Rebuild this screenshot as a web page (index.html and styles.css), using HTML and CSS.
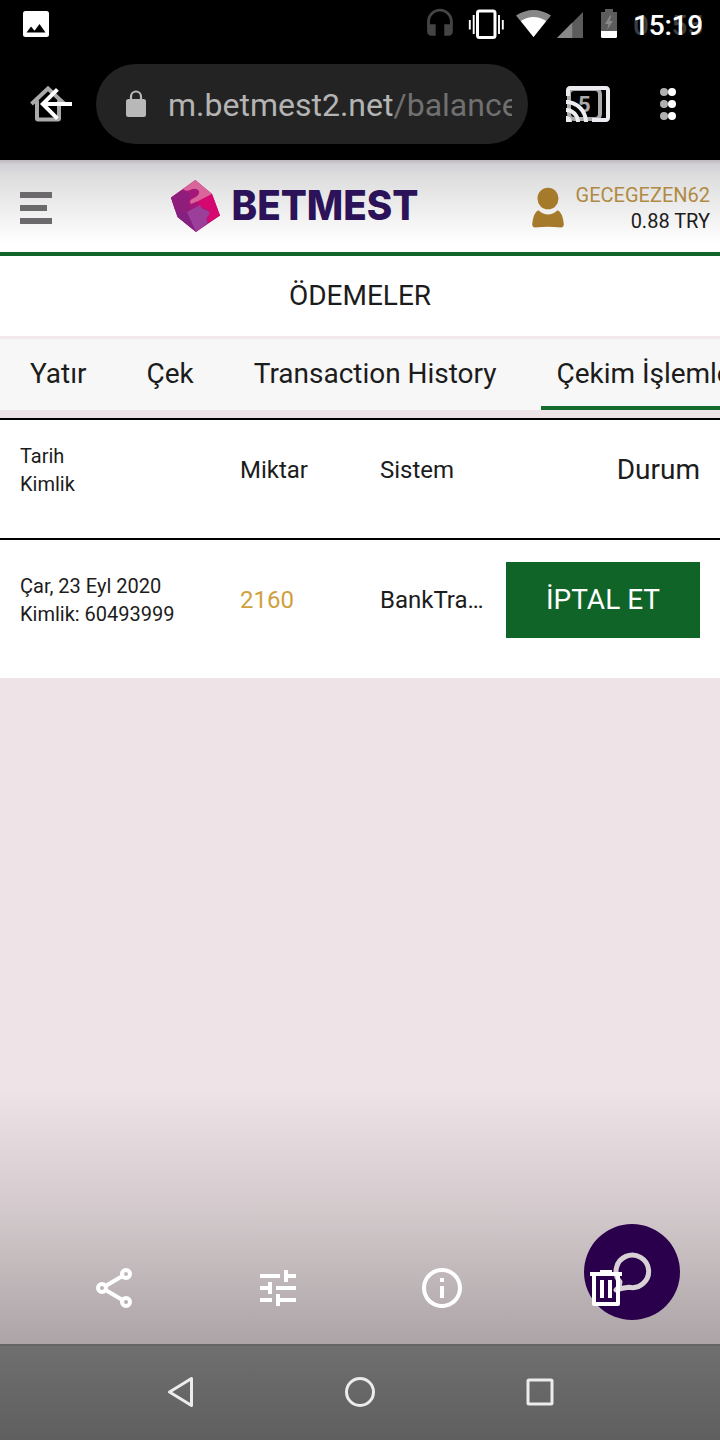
FILE: index.html
```html
<!DOCTYPE html>
<html lang="tr">
<head>
<meta charset="UTF-8">
<meta name="viewport" content="width=device-width, initial-scale=1.0">
<title>Betmest</title>
<link rel="stylesheet" href="styles.css">
</head>
<body>
<div class="screen">
    <div class="status-bar">
        <svg class="photo-icon" width="26" height="26" viewBox="0 0 26 26">
            <rect width="26" height="26" rx="2.5" fill="#fff"/>
            <path d="M3.5 21.5L8 15.5l3.5 4.2 5-6.7 6 8.5z" fill="#000"/>
        </svg>
        <svg class="status-icons" width="200" height="48" viewBox="0 0 200 48">
            <!-- headset -->
            <path transform="translate(2.8 7.2) scale(1.43)" fill="#444" d="M12 1c-4.97 0-9 4.03-9 9v7c0 1.66 1.34 3 3 3h3v-8H5v-2c0-3.87 3.13-7 7-7s7 3.13 7 7v2h-4v8h3c1.66 0 3-1.34 3-3v-7c0-4.97-4.03-9-9-9z"/>
            <!-- vibrate -->
            <rect x="57.5" y="11" width="17.5" height="26.5" rx="2" fill="none" stroke="#fff" stroke-width="3"/>
            <path d="M49.8 20v9.5M53.7 15v19M79 15v19M82.8 20v9.5" stroke="#fff" stroke-width="1.9"/>
            <!-- wifi -->
            <path d="M96 15.5Q113.500 4.500 131 15.500L113.500 37z" fill="#888"/>
            <path d="M100.800 21Q113.500 13 126.200 21L113.500 37z" fill="#fff"/>
            <!-- signal -->
            <path d="M137 38L163 12v26z" fill="#5c5c5c"/>
            <path d="M137 38l15.200-15.200V38z" fill="#888"/>
            <!-- battery -->
            <path d="M181 12h4V9h8v3h4v19h-16z" fill="#5c5c5c"/>
            <path d="M190 15.500l-5 8.500h3.500l-1.500 6 6-9h-3.500l2-5.500z" fill="#888"/>
            <path d="M181 31h16v5.500q0 1.500-1.500 1.500h-13q-1.500 0-1.500-1.500z" fill="#fff"/>
        </svg>
        <div class="clock"><span class="clock-ghost">05:55</span>15:19</div>
    </div>

    <div class="browser-bar">
        <svg class="back" width="48" height="48" viewBox="0 0 48 48">
            <path d="M3.500 24.500L20 9l16.500 15.500M9 21v18q0 1 1 1h20q1 0 1-1V21" transform="translate(-4 -.5)" fill="none" stroke="#aaa" stroke-width="4"/>
            <path d="M40 22H15.660l11.180-11.180L24 8 8 24l16 16 2.820-2.820L15.660 26H40v-4z" fill="#fff"/>
        </svg>
        <div class="address">
            <svg width="22" height="28" viewBox="0 0 22 28">
                <rect x="1" y="9" width="20" height="18" rx="2.500" fill="#b8b8b8"/>
                <path d="M6 10V6.500a5 5 0 0 1 10 0V10" fill="none" stroke="#b8b8b8" stroke-width="2.200"/>
            </svg>
            <div class="url">m.betmest2.net<span>/balance</span></div>
        </div>
        <svg class="cast" width="48" height="48" viewBox="0 0 48 48">
            <rect x="5" y="9" width="31" height="30" rx="5" fill="none" stroke="#aaa" stroke-width="4"/>
            <text x="14" y="31.500" class="tab-count">5</text>
            <path transform="scale(2)" fill="#ececf0" d="M21 3H3c-1.100 0-2 .9-2 2v3h2V5h18v14h-7v2h7c1.100 0 2-.9 2-2V5c0-1.100-.9-2-2-2zM1 18v3h3c0-1.660-1.340-3-3-3zm0-4v2c2.760 0 5 2.240 5 5h2c0-3.870-3.130-7-7-7zm0-4v2c4.970 0 9 4.030 9 9h2c0-6.080-4.930-11-11-11z"/>
        </svg>
        <svg class="more" width="16" height="32" viewBox="0 0 16 32">
            <g fill="#b0b0b0"><circle cx="4" cy="4" r="4"/><circle cx="4" cy="16" r="4"/><circle cx="4" cy="28" r="4"/></g>
            <g fill="#fff"><circle cx="12" cy="4" r="4"/><circle cx="12" cy="16" r="4"/><circle cx="12" cy="28" r="4"/></g>
        </svg>
    </div>

    <div class="site-header">
        <div class="menu"><i></i><i class="short"></i><i></i></div>
        <svg class="logo" width="250" height="54" viewBox="0 0 250 54">
            <path d="M25.300 1L42 15 50 36.500 26 53 7.500 38 1 18.500z" fill="#a51778"/>
            <path d="M1 18.500L20 29l6 24L7.500 38z" fill="#84207f"/>
            <path d="M1 18.500L12 11l8 4-2 8 3 8-3 5L5 31z" fill="#8f1d7c"/>
            <path d="M25.300 1L42 15l-9 6q-6 1-12 4-3-4 3-6 6-3 5-7-3-4-9-1-4 2-7-1z" fill="#d9659a"/>
            <path d="M42 15l8 21.500-11 7q-4-2-1-7 4-6-4-7-9-2-5-8z" fill="#d4086f"/>
            <path d="M17 33l13-7q1 4 6 5 6 2 2 6-3 3 0 6.500L26 53z" fill="#9c3f9b"/>
            <text x="61.500" y="41" textLength="187" lengthAdjust="spacingAndGlyphs">BETMEST</text>
        </svg>
        <div class="account">
            <svg width="34" height="42" viewBox="0 0 34 42">
                <ellipse cx="17" cy="11.500" rx="10.500" ry="10.800"/>
                <path d="M7.500 23.200Q17 32 26.500 23.200 31.500 25 32.800 37q0 3.500-3 3.500-12.800-1.500-25.600 0-3 0-3-3.500Q2.500 25 7.500 23.200z"/>
            </svg>
            <div class="account-text">
                <div class="user">GECEGEZEN62</div>
                <div>0.88 TRY</div>
            </div>
        </div>
    </div>

    <div class="page-title">ÖDEMELER</div>
    <div class="tabs">
        <div class="tab">Yatır</div>
        <div class="tab">Çek</div>
        <div class="tab">Transaction History</div>
        <div class="tab active">Çekim İşlemleri</div>
    </div>

    <div class="table">
        <div class="row head">
            <div class="date">Tarih<br>Kimlik</div>
            <div class="amount">Miktar</div>
            <div class="system">Sistem</div>
            <div class="state">Durum</div>
        </div>
        <div class="row">
            <div class="date">Çar, 23 Eyl 2020<br>Kimlik: 60493999</div>
            <div class="amount gold">2160</div>
            <div class="system">BankTra…</div>
            <div class="state"><button>İPTAL ET</button></div>
        </div>
    </div>

    <div class="shade">
        <svg class="chat" width="96" height="96" viewBox="0 0 96 96">
            <circle cx="48" cy="48" r="48" fill="#2a004c"/>
            <path d="M36 58a16.300 16.300 0 1 1 9 5.300q-7 .7-13 2.700l3-3z" fill="none" stroke="#d8d2d7" stroke-width="5" stroke-linejoin="round"/>
        </svg>
        <div class="actions">
            <svg width="48" height="48" viewBox="0 0 48 48" fill="none" stroke="#fff" stroke-width="4">
                <circle cx="12" cy="24" r="4"/><circle cx="36" cy="10" r="4"/><circle cx="36" cy="38" r="4"/>
                <path d="M15.500 22l17-10M15.500 26l17 10"/>
            </svg>
            <svg width="48" height="48" viewBox="0 0 24 24" fill="#fff">
                <path d="M3 17v2h6v-2H3zM3 5v2h10V5H3zm10 16v-2h8v-2h-8v-2h-2v6h2zM7 9v2H3v2h4v2h2V9H7zm14 4v-2H11v2h10zm-6-4h2V7h4V5h-4V3h-2v6z"/>
            </svg>
            <svg width="48" height="48" viewBox="0 0 24 24" fill="#fff">
                <path d="M11 7h2v2h-2zm0 4h2v6h-2zm1-9C6.480 2 2 6.480 2 12s4.480 10 10 10 10-4.480 10-10S17.520 2 12 2zm0 18c-4.410 0-8-3.590-8-8s3.590-8 8-8 8 3.590 8 8-3.590 8-8 8z"/>
            </svg>
            <svg width="48" height="48" viewBox="0 0 48 48" fill="#fff">
                <path d="M18 6h12v2h10v4H8V8h10zM18 16h4v18h-4zM26 16h4v18h-4z"/>
                <path d="M12 11v29h24V11" fill="none" stroke="#fff" stroke-width="4" stroke-linejoin="round"/>
            </svg>
        </div>
    </div>

    <div class="nav-bar">
        <svg width="32" height="32" viewBox="0 0 32 32"><path d="M5.500 16L27.500 2.500v27z"/></svg>
        <svg width="32" height="32" viewBox="0 0 32 32"><circle cx="16" cy="16" r="13.500"/></svg>
        <svg width="32" height="32" viewBox="0 0 32 32"><rect x="4" y="4" width="24" height="24" rx="1"/></svg>
    </div>
</div>
</body>
</html>
```

FILE: styles.css
```css
body {
    margin: 0;
    font-family: Roboto, sans-serif;
    color: #1c1c1c;
    background-color: #eee3e6;
}
svg {
    display: block;
    flex-shrink: 0;
}
.screen {
    display: flex;
    flex-direction: column;
    width: 720px;
    height: 1440px;
    overflow: hidden;
}

/* Status bar */
.status-bar {
    display: flex;
    height: 48px;
    background-color: #000;
}
.photo-icon {
    margin: 11px 0 0 23px;
}
.status-icons {
    margin-left: 371px;
}
.clock {
    position: relative;
    margin-left: 13px;
    line-height: 51px;
    font-size: 28px;
    font-weight: 500;
    letter-spacing: -0.2px;
    color: #fff;
    z-index: 0;
}
.clock-ghost {
    position: absolute;
    left: 0;
    top: 0;
    color: #3c3c3c;
    z-index: -1;
}

/* Browser bar */
.browser-bar {
    display: flex;
    align-items: center;
    height: 112px;
    background-color: #000;
}
.back {
    margin-left: 32px;
    overflow: visible;
}
.address {
    display: flex;
    align-items: center;
    box-sizing: border-box;
    width: 432px;
    height: 80px;
    margin-left: 16px;
    padding: 0 16px 0 29px;
    border-radius: 40px;
    background-color: #232323;
}
.url {
    flex: 1;
    margin-left: 21px;
    overflow: hidden;
    white-space: nowrap;
    font-size: 32px;
    line-height: 44px;
    padding-top: 2px;
    color: #b4b4b4;
}
.url span {
    color: #707070;
}
.cast {
    margin-left: 36px;
}
.tab-count {
    font-size: 22px;
    font-weight: 700;
    fill: #aaa;
}
.more {
    margin-left: 48px;
}

/* Site header */
.site-header {
    display: flex;
    box-sizing: border-box;
    height: 96px;
    border-bottom: 4px solid #11652a;
    background: linear-gradient(#bdb9bc 0, #d2d2d8 5px, #dcdcdc 14px, #fff 84px);
}
.menu {
    display: flex;
    flex-direction: column;
    gap: 7px;
    width: 32px;
    margin: 32px 0 0 20px;
}
.menu i {
    height: 6px;
    background-color: #6b696c;
}
.menu .short {
    width: 27px;
}
.logo {
    margin: 19px 0 0 118px;
    overflow: visible;
}
.logo text {
    font-family: Inter, sans-serif;
    font-size: 41px;
    font-weight: 800;
    fill: #2b1259;
}
.account {
    display: flex;
    flex: 1;
    justify-content: flex-end;
    padding-right: 10px;
}
.account svg {
    margin-top: 27px;
    fill: #a67a2b;
}
.account-text {
    margin: 22px 0 0 11px;
    text-align: right;
    font-size: 20px;
    line-height: 26px;
}
.user {
    color: #b08a42;
}

/* Title and tabs */
.page-title {
    height: 80px;
    line-height: 79px;
    text-align: center;
    font-size: 28px;
    background-color: #fff;
}
.tabs {
    display: flex;
    box-sizing: border-box;
    height: 74px;
    border-top: 3px solid #f3e8ec;
    overflow: hidden;
    background-color: #f7f7f7;
}
.tab {
    box-sizing: border-box;
    flex-shrink: 0;
    margin: 0 15px;
    padding: 0 15px;
    line-height: 70px;
    font-size: 28px;
    letter-spacing: -0.02px;
    white-space: nowrap;
}
.active {
    height: 71px;
    margin-right: 0;
    border-bottom: 4px solid #156b2d;
}

/* Withdrawals */
.table {
    margin-top: 8px;
}
.row {
    display: flex;
    align-items: center;
    box-sizing: border-box;
    height: 140px;
    padding: 0 20px 18px;
    border-top: 2px solid #000;
    background-color: #fff;
    font-size: 24px;
}
.head {
    height: 120px;
}
.date {
    width: 220px;
    font-size: 20px;
    line-height: 28px;
}
.amount {
    width: 140px;
}
.gold {
    color: #d0a03f;
}
.system {
    width: 126px;
}
.state {
    flex: 1;
    text-align: right;
    font-size: 28px;
}
.head .state {
    padding-bottom: 2px;
}
.state button {
    display: block;
    width: 194px;
    height: 76px;
    padding: 0 0 2px;
    border: none;
    background-color: #106428;
    color: #fff;
    font-family: inherit;
    font-size: 28px;
}

/* Bottom shade with photo actions */
.shade {
    position: relative;
    display: flex;
    align-items: flex-end;
    flex: 1;
    background: linear-gradient(transparent 410px, rgba(0, 0, 0, 0.11) 530px, rgba(0, 0, 0, 0.28) 666px);
}
.chat {
    position: absolute;
    right: 40px;
    bottom: 24px;
}
.actions {
    position: relative;
    display: flex;
    flex: 1;
    padding: 0 32px 32px;
}
.actions svg {
    flex: 1;
}
.nav-bar {
    display: flex;
    align-items: center;
    justify-content: center;
    gap: 148px;
    box-sizing: border-box;
    height: 96px;
    padding-bottom: 2px;
    border-top: 2px solid #646464;
    background: linear-gradient(#6f6f6f, #5f5f5f);
}
.nav-bar svg {
    fill: none;
    stroke: #ececec;
    stroke-width: 3;
    stroke-linejoin: round;
}
```
